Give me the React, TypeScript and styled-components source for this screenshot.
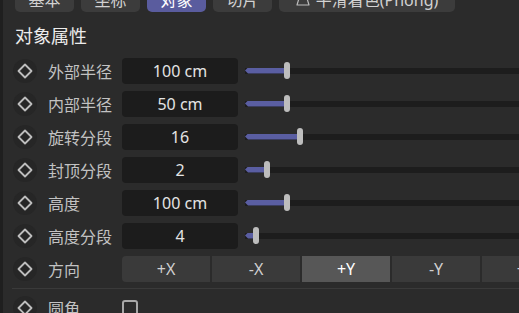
import React from 'react';
import styled, { createGlobalStyle } from 'styled-components';

const GlobalStyle = createGlobalStyle`
  html, body {
    margin: 0;
    padding: 0;
    background: #2b2b2b;
    overflow: hidden;
  }
  body {
    font-family: 'Noto Sans', 'Noto Sans CJK SC', sans-serif;
  }
`;

const rows = [
  { label: '外部半径', value: '100 cm', pos: 42 },
  { label: '内部半径', value: '50 cm', pos: 42 },
  { label: '旋转分段', value: '16', pos: 55 },
  { label: '封顶分段', value: '2', pos: 22 },
  { label: '高度', value: '100 cm', pos: 42 },
  { label: '高度分段', value: '4', pos: 11 },
];

const tabs = ['基本', '坐标', '对象', '切片'];
const axes = ['+X', '-X', '+Y', '-Y', '+Z', '-Z'];

function Diamond() {
  return (
    <KeyIcon>
      <svg width="16" height="16" viewBox="0 0 16 16">
        <path
          d="M8 1.5 L14.5 8 L8 14.5 L1.5 8 Z"
          fill="none"
          stroke="#bdbdbd"
          strokeWidth="1.8"
          strokeLinejoin="round"
        />
      </svg>
    </KeyIcon>
  );
}

function Slider({ pos }: { pos: number }) {
  return (
    <SliderWrap>
      <Rail>
        <Fill style={{ width: pos }} />
      </Rail>
      <Thumb style={{ left: pos - 3 }} />
    </SliderWrap>
  );
}

export default function App() {
  return (
    <>
      <GlobalStyle />
      <Page>
        <Gutter />
        <Panel>
          <TabBar>
            {tabs.map((t, i) => (
              <Tab key={t} active={i === 2}>
                {t}
              </Tab>
            ))}
            <Tab wide>
              <svg width="14" height="12" viewBox="0 0 14 12">
                <path
                  d="M4 1 H10 L13 11 H1 Z"
                  fill="none"
                  stroke="#bbb"
                  strokeWidth="1.2"
                  strokeLinejoin="round"
                />
              </svg>
              平滑着色(Phong)
            </Tab>
          </TabBar>
          <Heading>对象属性</Heading>
          {rows.map((r) => (
            <Row key={r.label}>
              <Diamond />
              <Label>{r.label}</Label>
              <ValueBox>{r.value}</ValueBox>
              <Slider pos={r.pos} />
            </Row>
          ))}
          <Row>
            <Diamond />
            <Label>方向</Label>
            <Segments>
              {axes.map((a, i) => (
                <Segment key={a} active={i === 2}>
                  {a}
                </Segment>
              ))}
            </Segments>
          </Row>
          <Divider />
          <Row>
            <Diamond />
            <Label>圆角</Label>
            <Checkbox />
          </Row>
        </Panel>
      </Page>
    </>
  );
}

const Page = styled.div`
  display: flex;
  width: 519px;
  height: 313px;
  overflow: hidden;
`;

const Gutter = styled.div`
  width: 3px;
  flex: none;
  background: #1f1f1f;
`;

const Panel = styled.div`
  flex: 1;
  min-width: 0;
  display: flex;
  flex-direction: column;
  padding-left: 10px;
  overflow: hidden;
`;

const TabBar = styled.div`
  display: flex;
  gap: 7px;
  margin-top: -12px;
  padding-left: 2px;
  height: 24px;
  flex: none;
`;

const Tab = styled.div<{ active?: boolean; wide?: boolean }>`
  width: ${({ wide }) => (wide ? '176px' : '59px')};
  height: 24px;
  border-radius: 5px;
  background: ${({ active }) => (active ? '#5a5c9e' : '#3c3c3c')};
  color: ${({ active }) => (active ? '#ffffff' : '#d2d2d2')};
  font-size: 16px;
  line-height: 24px;
  display: flex;
  align-items: center;
  justify-content: center;
  gap: 6px;
  flex: none;
`;

const Heading = styled.div`
  margin-top: 12px;
  height: 24px;
  line-height: 24px;
  font-size: 18px;
  color: #ececec;
  margin-left: 2px;
  margin-bottom: 6px;
`;

const Row = styled.div`
  display: flex;
  align-items: center;
  height: 33px;
  flex: none;
`;

const KeyIcon = styled.div`
  width: 24px;
  height: 24px;
  border-radius: 50%;
  background: #262626;
  display: flex;
  align-items: center;
  justify-content: center;
  flex: none;
`;

const Label = styled.div`
  width: 74px;
  margin-left: 11px;
  font-size: 16px;
  color: #c2c2c2;
  white-space: nowrap;
  flex: none;
`;

const ValueBox = styled.div`
  width: 116px;
  height: 26px;
  border-radius: 4px;
  background: #1c1c1c;
  color: #e4e4e4;
  font-size: 16px;
  display: flex;
  align-items: center;
  justify-content: center;
  flex: none;
`;

const SliderWrap = styled.div`
  position: relative;
  flex: none;
  width: 300px;
  margin-left: 7px;
  height: 18px;
  display: flex;
  align-items: center;
`;

const Rail = styled.div`
  position: relative;
  width: 100%;
  height: 6px;
  background: #1d1d1d;
`;

const Fill = styled.div`
  position: absolute;
  left: 0;
  top: 0;
  height: 100%;
  background: #5a5ea2;
  clip-path: polygon(0 50%, 3px 0, 100% 0, 100% 100%, 3px 100%);
`;

const Thumb = styled.div`
  position: absolute;
  top: 0;
  width: 6px;
  height: 17px;
  border-radius: 3px;
  background: #bdbdbd;
`;

const Segments = styled.div`
  display: flex;
  gap: 2px;
  flex: none;
`;

const Segment = styled.div<{ active?: boolean }>`
  width: 88px;
  height: 26px;
  background: ${({ active }) => (active ? '#575757' : '#3a3a3a')};
  color: ${({ active }) => (active ? '#ffffff' : '#d0d0d0')};
  font-size: 16px;
  display: flex;
  align-items: center;
  justify-content: center;
  flex: none;

  &:first-child {
    border-radius: 4px 0 0 4px;
  }
`;

const Divider = styled.div`
  height: 1px;
  background: #3a3a3a;
  margin: 3px 0 2px -1px;
  flex: none;
`;

const Checkbox = styled.div`
  width: 12px;
  height: 12px;
  border: 2px solid #a8a8a8;
  border-radius: 3px;
  flex: none;
`;
